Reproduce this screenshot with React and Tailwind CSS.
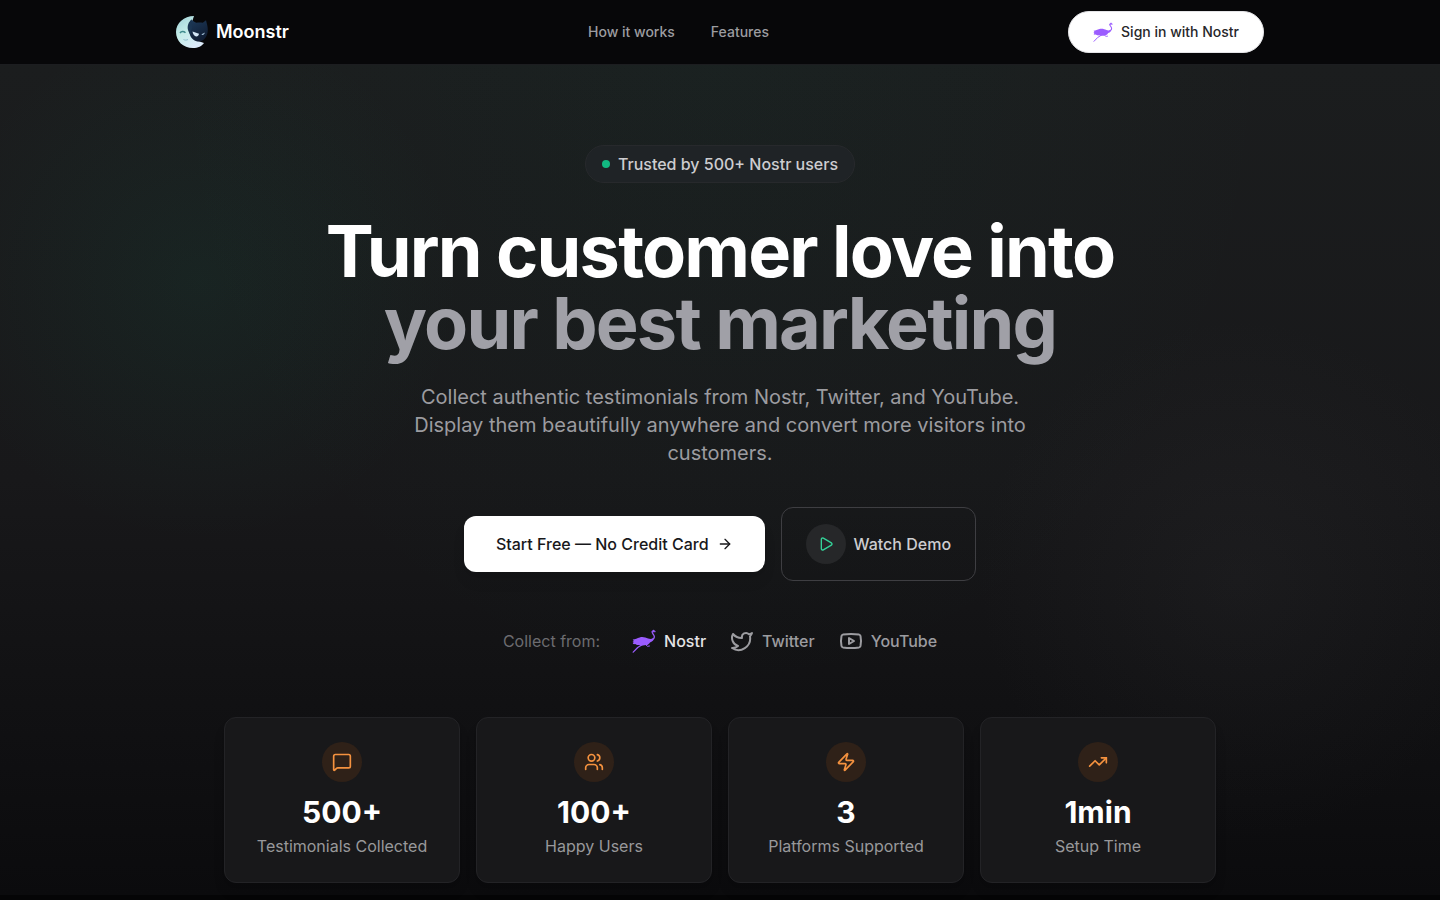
import { ArrowRight, MessageSquare, Play, TrendingUp, Twitter, Users, Youtube, Zap } from "lucide-react";

const STATS = [
    { icon: MessageSquare, value: "500+", label: "Testimonials Collected" },
    { icon: Users, value: "100+", label: "Happy Users" },
    { icon: Zap, value: "3", label: "Platforms Supported" },
    { icon: TrendingUp, value: "1min", label: "Setup Time" },
];

function MoonLogo() {
    return (
        <svg viewBox="0 0 32 32" className="size-8" aria-hidden="true">
            <defs>
                <linearGradient id="moon" x1="0" y1="0" x2="0.6" y2="1">
                    <stop offset="0" stopColor="#9fd0d8" />
                    <stop offset="0.5" stopColor="#c4ece8" />
                    <stop offset="1" stopColor="#dcebfa" />
                </linearGradient>
                <linearGradient id="night" x1="0" y1="0" x2="0.5" y2="1">
                    <stop offset="0" stopColor="#1d3a5a" />
                    <stop offset="1" stopColor="#101d33" />
                </linearGradient>
            </defs>
            {/* crescent */}
            <path d="M18 0C8 0 0 7 0 16s7 16 17 16c5 0 9-2 11-5l-9-3L14 12z" fill="url(#moon)" />
            {/* cat */}
            <path d="M15.500 3.500c1.500 1.800 3.300 2.800 5 3.200 2.300-.4 4.500-.3 6.300.1L30 4.200c.7 3 1.800 6 1.800 9.800 0 6-3.800 11.500-9 11.500-4 0-7.300-2.500-8.800-6.500-1-2.800-.4-5.200 1-7.500-1.300-2.500-1-5.500.5-8z" fill="url(#night)" />
            <path d="M15.500 3.500c-3 2.500-4.500 6.500-3.500 10.500.5 2 1.500 3 2.500 5L16 11z" fill="#1b3552" />
            <path d="M16.500 15.500l6.500 2.300c-.3 2-1.500 2.700-2.800 2.600-1.800-.2-3.200-2-3.700-4.900z" fill="#d3e6f5" />
            <path d="M29 16.500l-3.500 1.800c.3 1.300 2.300 1 3.500-1.800z" fill="#9fbcd3" />
            <path d="M4 17c1.300-1.800 3.500-2 5.500-.2" fill="none" stroke="#3f8b8e" strokeWidth="1.500" />
            <path d="M7.500 23.500c1.500.8 3 .8 4.500 0" fill="none" stroke="#8cbccb" />
        </svg>
    );
}

function Ostrich({ className }) {
    return (
        <svg viewBox="0 0 24 24" className={className} fill="none" stroke="#9b5cff" strokeLinecap="round" strokeLinejoin="round" aria-hidden="true">
            <path d="M.7 10.600c2.600-.2 4.600-1.600 7-2.200 3.400-.8 6 .2 8.400 1.200 2 .7 3.600.6 4.800-.3l.7 1.500c-1 1.500-2.300 2.200-3.600 2.600-.9 1.600-2.200 2.400-3.800 2.700-2.200.5-5 .6-7.200-.1-1.500.3-3-.3-3.900-.9-.9.2-1.800 0-2.400-.5l1-1L.5 13l1.300-1z" fill="#9b5cff" stroke="none" />
            <path d="M20.300 10.600c2-1 2.500-2.700 1.600-4.300-.8-1.400-2-2.200-1.800-3.600" strokeWidth="1.300" />
            <path d="M20.200 2.500c.2-1.500 1.800-1.800 2.400-.8l.9 1.100-2.800.3z" fill="#9b5cff" strokeWidth="0.500" />
            <path d="M10.500 15.500L5.700 18.500 1.200 23.200" strokeWidth="1.200" />
            <path d="M13 15l2.500 2.300 2-.3" strokeWidth="1" />
        </svg>
    );
}

function Header() {
    return (
        <header className="border-b border-[#1c1d20] bg-[#070709]">
            <div className="mx-auto flex h-16 max-w-6xl items-center justify-between px-8">
                <a href="#top" className="flex items-center gap-2 text-lg font-semibold text-white">
                    <MoonLogo />
                    Moonstr
                </a>
                <nav className="flex items-center gap-9 text-sm font-medium text-[#9c9ca0]">
                    <a href="#how-it-works">How it works</a>
                    <a href="#features">Features</a>
                </nav>
                <button
                    type="button"
                    className="flex items-center gap-2 rounded-full border border-zinc-200 bg-white px-6 py-2.5 text-sm font-medium text-[#27272a]">
                    <Ostrich className="size-5" />
                    Sign in with Nostr
                </button>
            </div>
        </header>
    );
}

function StatCard({ icon: Icon, value, label }) {
    return (
        <div className="flex flex-col items-center rounded-xl border border-[#232326] bg-[#18181a] p-6 shadow-lg">
            <div className="mb-3 flex size-10 items-center justify-center rounded-full bg-[#2f2118]">
                <Icon className="size-5 text-[#f5923f]" />
            </div>
            <div className="mb-1 text-3xl font-bold text-white">{value}</div>
            <div className="text-base text-[#98989b]">{label}</div>
        </div>
    );
}

function Hero() {
    return (
        <section
            className="bg-[radial-gradient(circle_at_200px_216px,rgba(16,150,110,0.08),transparent_260px),radial-gradient(ellipse_at_50%_0%,rgba(16,150,110,0.04),transparent_55%),radial-gradient(circle_at_86%_62%,rgba(63,63,66,0.14),transparent_260px),linear-gradient(to_bottom,#1b1d1e,#18181a_50%,#0b0b0d)] px-4 pt-20 pb-3">
            <div className="mx-auto flex max-w-[992px] flex-col items-center text-center">
                <div className="mb-8 flex items-center gap-2 rounded-full border border-[#27292c] bg-[#1f2326] px-4 py-1.5 text-base font-medium text-[#cdcdd0]">
                    <span className="size-2 rounded-full bg-[#12b981]" />
                    Trusted by 500+ Nostr users
                </div>

                <h1 className="mb-6 text-7xl leading-none font-bold tracking-tight text-white">
                    Turn customer love into
                    <span className="block text-[#a0a0a7]">your best marketing</span>
                </h1>

                <p className="mb-10 max-w-2xl text-xl leading-7 text-[#9c9ca0]">
                    Collect authentic testimonials from Nostr, Twitter, and YouTube. Display them
                    beautifully anywhere and convert more visitors into customers.
                </p>

                <div className="mb-12 flex items-center gap-4">
                    <button
                        type="button"
                        className="flex h-14 items-center gap-2 rounded-xl bg-white px-8 text-base font-medium text-zinc-900 shadow-lg">
                        Start Free — No Credit Card
                        <ArrowRight className="size-4" />
                    </button>
                    <button
                        type="button"
                        className="flex items-center gap-2 rounded-xl border border-[#3e3e42] px-6 py-4 text-base font-medium text-[#cdcdd0]">
                        <span className="flex size-10 items-center justify-center rounded-full bg-[#262729]">
                            <Play className="size-4 text-[#34d399]" />
                        </span>
                        Watch Demo
                    </button>
                </div>

                <div className="mb-16 flex items-center gap-8 text-base">
                    <span className="text-[#6c6c70]">Collect from:</span>
                    <ul className="flex items-center gap-6 font-medium text-[#9c9ca0]">
                        <li className="flex items-center gap-2 text-zinc-200">
                            <Ostrich className="size-6" />
                            Nostr
                        </li>
                        <li className="flex items-center gap-2">
                            <Twitter className="size-6" />
                            Twitter
                        </li>
                        <li className="flex items-center gap-2">
                            <Youtube className="size-6" />
                            YouTube
                        </li>
                    </ul>
                </div>

                <div className="grid w-full grid-cols-4 gap-4">
                    {STATS.map((stat) => (
                        <StatCard key={stat.label} {...stat} />
                    ))}
                </div>
            </div>
        </section>
    );
}

export default function App() {
    return (
        <div id="top" className="min-h-screen bg-[#050506] font-['Inter',sans-serif] antialiased">
            <Header />
            <main>
                <Hero />
            </main>
        </div>
    );
}
